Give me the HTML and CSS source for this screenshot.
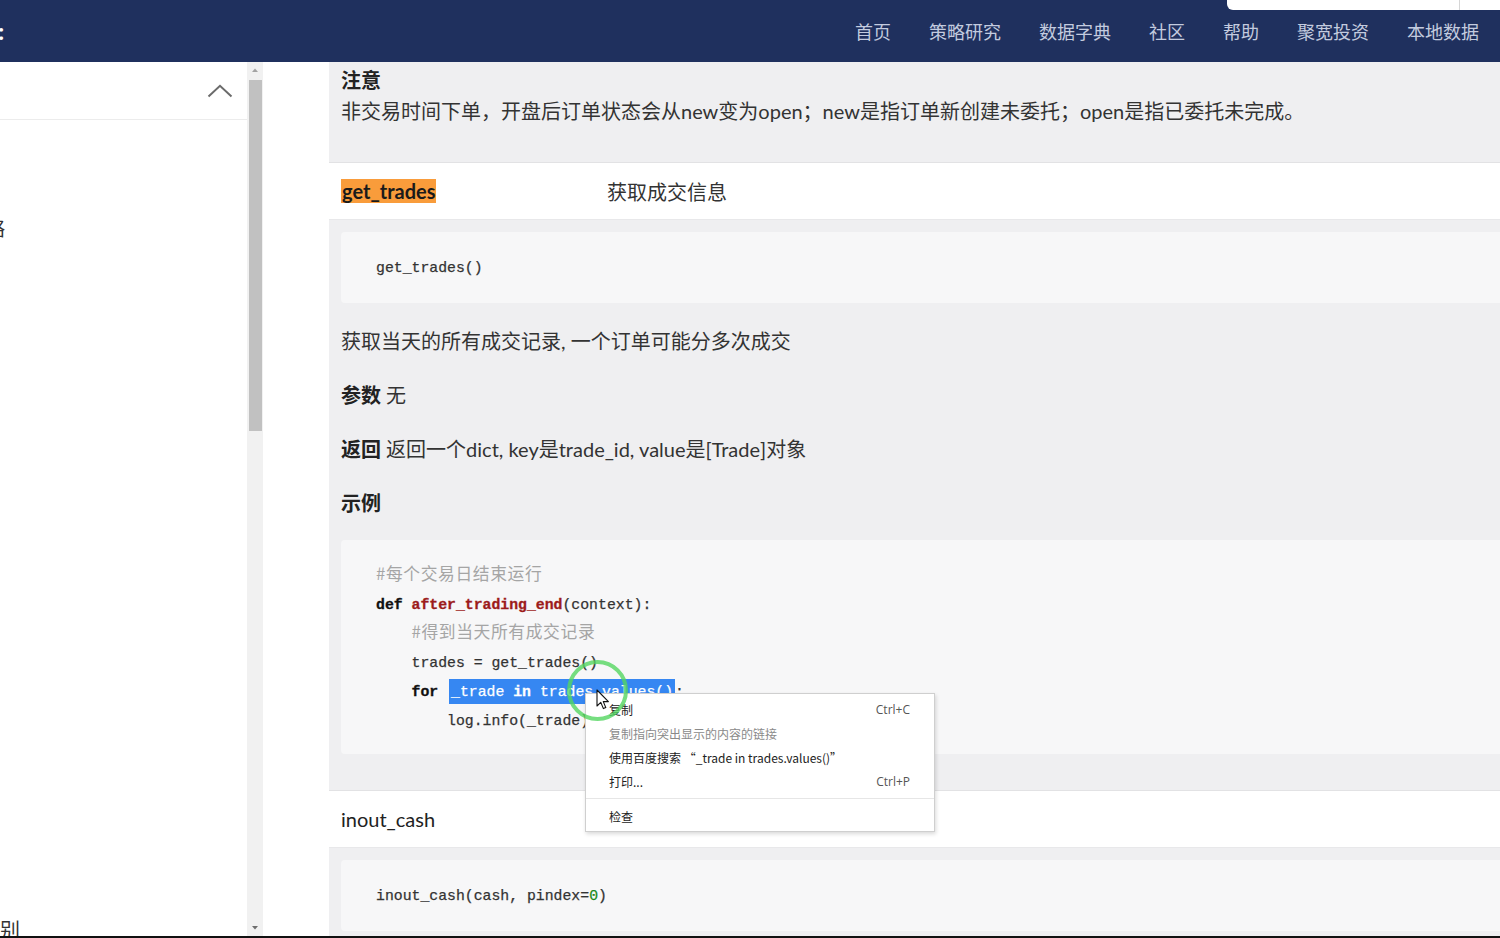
FILE: index.html
```html
<!DOCTYPE html>
<html lang="zh-CN">
<head>
<meta charset="utf-8">
<title>API 文档</title>
<link rel="stylesheet" href="styles.css">
</head>
<body>
<header class="topbar">
  <span class="brand">:</span>
  <nav class="nav">
    <a>首页</a>
    <a>策略研究</a>
    <a>数据字典</a>
    <a>社区</a>
    <a>帮助</a>
    <a>聚宽投资</a>
    <a>本地数据</a>
  </nav>
  <div class="search"><span class="search-div"></span></div>
</header>

<div class="main">
  <aside class="sidebar">
    <div class="side-head">
      <svg class="chev" width="26" height="14" viewBox="0 0 26 14"><path d="M1.5 12.5 L13 1.8 L24.5 12.5" fill="none" stroke="#6b6b6b" stroke-width="2"/></svg>
    </div>
    <div class="side-item first">策略</div>
    <div class="side-fill"></div>
    <div class="side-item last">类别</div>
  </aside>

  <div class="scrollbar">
    <div class="sb-btn"><svg width="16" height="16" viewBox="0 0 16 16"><path d="M5 10 L8 6.5 L11 10 Z" fill="#a3a3a3"/></svg></div>
    <div class="sb-thumb"></div>
    <div class="sb-fill"></div>
    <div class="sb-btn"><svg width="16" height="16" viewBox="0 0 16 16"><path d="M5 6 L8 9.5 L11 6 Z" fill="#6e6e6e"/></svg></div>
  </div>

  <div class="gutter"></div>

  <main class="content">
    <section class="note">
      <div class="note-title">注意</div>
      <div class="note-text">非交易时间下单，开盘后订单状态会从new变为open；new是指订单新创建未委托；open是指已委托未完成。</div>
    </section>

    <div class="api-row">
      <span class="api-name"><span class="hl">get_trades</span></span>
      <span class="api-desc">获取成交信息</span>
    </div>

    <section class="api-body">
      <pre class="code single"><code>get_trades()</code></pre>
      <p class="para">获取当天的所有成交记录, 一个订单可能分多次成交</p>
      <p class="para"><b>参数</b> 无</p>
      <p class="para"><b>返回</b> 返回一个dict, key是trade_id, value是[Trade]对象</p>
      <p class="para"><b>示例</b></p>
      <pre class="code multi"><code><span class="cm">#每个交易日结束运行</span>
<span class="kw">def</span> <span class="fn">after_trading_end</span>(context):
    <span class="cm">#得到当天所有成交记录</span>
    trades = get_trades()
    <span class="kw">for</span> <span class="sel">_trade <span class="kw">in</span> trades.values()</span>:
        log.info(_trade)</code></pre>
    </section>

    <div class="api-row">
      <span class="api-name plain">inout_cash</span>
    </div>

    <section class="api-body tail">
      <pre class="code single"><code>inout_cash(cash, pindex=<span class="num">0</span>)</code></pre>
    </section>
  </main>
</div>

<div class="ctx-menu">
  <div class="ctx-item"><span>复制</span><span class="key">Ctrl+C</span></div>
  <div class="ctx-item dim"><span>复制指向突出显示的内容的链接</span></div>
  <div class="ctx-item"><span>使用百度搜索 “_trade in trades.values()”</span></div>
  <div class="ctx-item"><span>打印...</span><span class="key">Ctrl+P</span></div>
  <div class="ctx-sep"></div>
  <div class="ctx-item"><span>检查</span></div>
</div>

<div class="click-ring"></div>
<svg class="cursor" width="14" height="22" viewBox="0 0 14 22">
  <path d="M1 1 L1 17 L4.8 13.4 L7.4 19.6 L9.8 18.6 L7.3 12.6 L12.4 12.6 Z" fill="#fff" stroke="#111" stroke-width="1.1" stroke-linejoin="round"/>
</svg>
</body>
</html>
```
FILE: styles.css
```css
* { box-sizing: border-box; }

html, body {
  margin: 0;
  padding: 0;
}

body {
  width: 1500px;
  height: 938px;
  overflow: hidden;
  position: relative;
  background: #fff;
  font-family: "Lato", "Noto Sans CJK SC", sans-serif;
  color: #333;
}

/* ---------- top bar ---------- */
.topbar {
  height: 62px;
  background: #1f305e;
  display: flex;
  align-items: center;
  position: relative;
}

.brand {
  color: #fff;
  font-family: "Noto Sans", sans-serif;
  font-weight: 700;
  font-size: 22px;
  line-height: 22px;
  margin-left: -2px;
}

.nav {
  margin-left: auto;
  display: flex;
  gap: 38px;
  padding-right: 21px;
}

.nav a {
  font-family: "Noto Sans CJK SC", sans-serif;
  font-size: 18px;
  line-height: 24px;
  color: #c3cbdf;
}

.search {
  position: absolute;
  top: 0;
  right: 0;
  width: 273px;
  height: 10px;
  background: #fff;
  border-bottom-left-radius: 6px;
}

.search-div {
  position: absolute;
  left: 232px;
  top: 0;
  width: 1px;
  height: 10px;
  background: #d6d6d6;
}

/* ---------- main ---------- */
.main {
  display: flex;
  height: 876px;
  border-bottom: 2px solid #111;
}

.sidebar {
  width: 247px;
  flex: none;
  display: flex;
  flex-direction: column;
  overflow: hidden;
  background: #fff;
}

.side-head {
  height: 58px;
  flex: none;
  border-bottom: 1px solid #ececec;
  display: flex;
  align-items: center;
  justify-content: flex-end;
  padding-right: 14px;
}

.side-item {
  font-family: "Noto Sans CJK SC", sans-serif;
  font-size: 20px;
  line-height: 30px;
  color: #333;
  white-space: nowrap;
  flex: none;
}

.side-item.first {
  margin-top: 93px;
  margin-left: -35px;
}

.side-item.last {
  margin-left: -20px;
  margin-bottom: -9px;
}

.side-fill { flex: 1; }

.scrollbar {
  width: 16px;
  flex: none;
  background: #f1f1f1;
  display: flex;
  flex-direction: column;
}

.sb-btn {
  height: 16px;
  flex: none;
}

.sb-btn svg { display: block; }

.sb-thumb {
  height: 351px;
  margin: 2px 1px 0 2px;
  background: #c1c1c1;
  flex: none;
}

.sb-fill { flex: 1; }

.gutter {
  width: 66px;
  flex: none;
  background: #fff;
}

.content {
  flex: 1;
  overflow: hidden;
  min-width: 0;
}

/* note */
.note {
  background: #efeff1;
  height: 101px;
  padding: 3px 12px 0;
  border-bottom: 1px solid #e2e2e4;
}

.note-title {
  font-family: "Noto Sans CJK SC", sans-serif;
  font-weight: 700;
  font-size: 20px;
  line-height: 30px;
  color: #222;
}

.note-text {
  font-size: 20px;
  line-height: 32px;
  color: #333;
  white-space: nowrap;
}

/* api row */
.api-row {
  height: 57px;
  background: #fff;
  display: grid;
  grid-template-columns: 266px 1fr;
  align-items: center;
  padding-left: 12px;
  border-bottom: 1px solid #e8e8ea;
}

.api-name {
  font-size: 20px;
  line-height: 24px;
}

.hl {
  background: #f99c3b;
  color: #1a1a1a;
  font-weight: 700;
  padding: 0 1px;
  display: inline-block;
  line-height: 24px;
}

.api-name.plain {
  color: #222;
  font-weight: 400;
}

.api-desc {
  font-family: "Noto Sans CJK SC", sans-serif;
  font-size: 20px;
  color: #333;
}

/* body */
.api-body {
  background: #efeff1;
  padding: 12px 0 36px 12px;
  border-bottom: 1px solid #e2e2e4;
}

.api-body.tail {
  border-bottom: none;
  height: 200px;
}

.code {
  margin: 0 -20px 0 0;
  background: #f7f7f8;
  border-radius: 4px;
  padding: 22px 35px 18px;
  font-family: "Liberation Mono", "Noto Sans CJK SC", monospace;
  font-size: 14.8px;
  line-height: 29px;
  color: #333;
  -webkit-text-stroke: 0.25px #333;
}

.code.single { padding: 22px 35px 20px; }

.code code { font-family: inherit; }

.para {
  margin: 24px 0 0;
  font-size: 20px;
  line-height: 30px;
  color: #333;
}

.code + .para { margin-top: 23px; }

.para b {
  font-family: "Noto Sans CJK SC", sans-serif;
  font-weight: 700;
  color: #222;
}

.para + .code { margin-top: 22px; }

.cm {
  font-family: "Noto Sans CJK SC", sans-serif;
  font-size: 16.8px;
  line-height: 16px;
  color: #a5a5a5;
  -webkit-text-stroke: 0;
  letter-spacing: 0.6px;
}

.kw {
  font-weight: 700;
  color: #111;
  -webkit-text-stroke: 0.3px #111;
}

.fn {
  font-weight: 700;
  color: #9c1b1b;
  -webkit-text-stroke: 0.3px #9c1b1b;
}

.num { color: #1a8a1a; -webkit-text-stroke: 0.25px #1a8a1a; }

.sel {
  background: #3687f2;
  color: #fff;
  -webkit-text-stroke: 0.25px #fff;
  padding: 5px 2px 4px;
  margin-left: 2px;
}

.sel .kw {
  color: #fff;
  -webkit-text-stroke: 0.3px #fff;
}

/* context menu */
.ctx-menu {
  position: absolute;
  left: 585px;
  top: 693px;
  width: 350px;
  background: #fff;
  border: 1px solid #cfcfcf;
  box-shadow: 1px 2px 4px rgba(0, 0, 0, 0.15);
  padding: 3px 0 3px;
  font-family: "Noto Sans CJK SC", sans-serif;
  font-size: 12px;
  color: #222;
}

.ctx-item {
  height: 24px;
  display: flex;
  align-items: center;
  justify-content: space-between;
  padding: 0 24px 0 23px;
}

.ctx-item.dim { color: #8a8a8a; }

.ctx-item .key {
  font-family: "Open Sans", sans-serif;
  color: #555;
}

.ctx-sep {
  height: 1px;
  background: #e6e6e6;
  margin: 5px 0 5px;
}

/* click ring + cursor */
.click-ring {
  position: absolute;
  left: 567px;
  top: 660px;
  width: 61px;
  height: 61px;
  border-radius: 50%;
  border: 4px solid rgba(84, 214, 96, 0.8);
}

.cursor {
  position: absolute;
  left: 596px;
  top: 689px;
}
```
